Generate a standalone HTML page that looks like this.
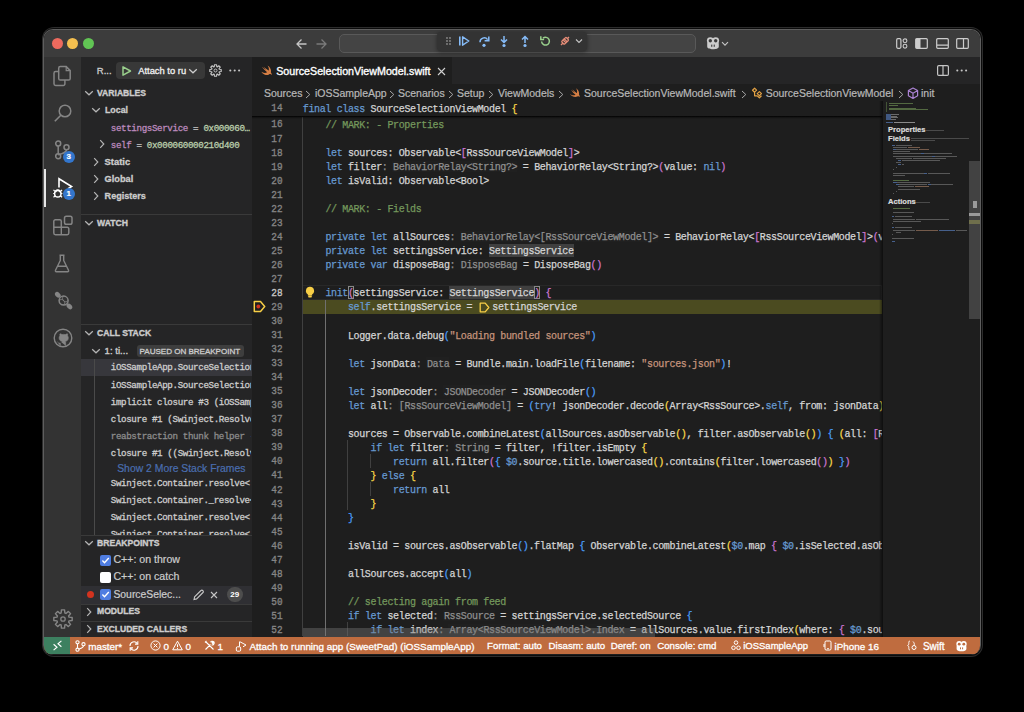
<!DOCTYPE html><html><head><meta charset="utf-8"><style>
html,body{margin:0;padding:0;background:#000;width:1024px;height:712px;overflow:hidden}
.t{position:absolute;white-space:pre;-webkit-text-stroke-width:0.2px}
.r{position:absolute}
#win{position:absolute;left:43px;top:29px;width:938px;height:626px;border-radius:10px;overflow:hidden;background:#1e1e1e}
</style></head><body>

<div style="position:absolute;left:41.5px;top:27px;width:941.5px;height:629.5px;border-radius:12px;background:#2c2c2c"></div>
<div style="position:absolute;left:42.5px;top:28px;width:939.5px;height:627.5px;border-radius:11px;background:#0c0c0c"></div>
<div style="position:absolute;left:43px;top:29px;width:938px;height:626px;border-radius:10px;background:#5e5e5e"></div>
<div style="position:absolute;left:0;top:0;width:1024px;height:712px;clip-path:inset(30px 44px 57px 44px round 9px);background:#1e1e1e">
<div class="r" style="left:44px;top:30px;width:936.00px;height:27.00px;background:#3c3c3c;"></div>
<div class="r" style="left:51.5px;top:38.0px;width:11px;height:11px;border-radius:50%;background:#ed6a5e"></div>
<div class="r" style="left:67.1px;top:38.0px;width:11px;height:11px;border-radius:50%;background:#f4bf4f"></div>
<div class="r" style="left:82.5px;top:38.0px;width:11px;height:11px;border-radius:50%;background:#61c554"></div>
<svg class="r" style="left:295px;top:38px;" width="13" height="12" viewBox="0 0 13 12"><path d="M11.5 6H2M6.5 1.5L2 6l4.5 4.5" fill="none" stroke="#c5c5c5" stroke-width="1.3"/></svg>
<svg class="r" style="left:315px;top:38px;" width="13" height="12" viewBox="0 0 13 12"><path d="M1.5 6H11M6.5 1.5L11 6l-4.5 4.5" fill="none" stroke="#7a7a7a" stroke-width="1.3"/></svg>
<div class="r" style="left:338.5px;top:34.2px;width:357px;height:18.5px;box-sizing:border-box;border:1px solid #595959;border-radius:5px;background:#444444"></div>
<div class="r" style="left:436.5px;top:31.7px;width:150.5px;height:19px;border-radius:4px;background:#333333;box-shadow:0 1px 4px rgba(0,0,0,0.45)"></div>
<svg class="r" style="left:446px;top:36.5px;" width="6" height="9" viewBox="0 0 6 9"><circle cx="1" cy="1" r="0.9" fill="#8a8a8a"/><circle cx="1" cy="4" r="0.9" fill="#8a8a8a"/><circle cx="1" cy="7" r="0.9" fill="#8a8a8a"/><circle cx="4" cy="1" r="0.9" fill="#8a8a8a"/><circle cx="4" cy="4" r="0.9" fill="#8a8a8a"/><circle cx="4" cy="7" r="0.9" fill="#8a8a8a"/></svg>
<svg class="r" style="left:458px;top:35px;" width="12" height="12" viewBox="0 0 12 12"><rect x="1" y="1.5" width="1.6" height="9" fill="#86bcf9"/><path d="M4.6 1.8v8.4L10.8 6z" fill="none" stroke="#86bcf9" stroke-width="1.4" stroke-linejoin="round"/></svg>
<svg class="r" style="left:478px;top:34.5px;" width="12" height="13" viewBox="0 0 12 13"><path d="M2 7.2A4.2 4.2 0 0 1 9.6 4.6" fill="none" stroke="#86bcf9" stroke-width="1.5"/><path d="M10.8 1.5v4.3H6.6" fill="none" stroke="#86bcf9" stroke-width="1.5"/><circle cx="6" cy="10.3" r="1.6" fill="#86bcf9"/></svg>
<svg class="r" style="left:498px;top:34.5px;" width="12" height="13" viewBox="0 0 12 13"><path d="M6 1v6M3 4.5L6 7.5 9 4.5" fill="none" stroke="#86bcf9" stroke-width="1.5"/><circle cx="6" cy="10.5" r="1.6" fill="#86bcf9"/></svg>
<svg class="r" style="left:518.5px;top:34.5px;" width="12" height="13" viewBox="0 0 12 13"><path d="M6 8V1.8M3 4.5L6 1.5 9 4.5" fill="none" stroke="#86bcf9" stroke-width="1.5"/><circle cx="6" cy="10.5" r="1.6" fill="#86bcf9"/></svg>
<svg class="r" style="left:538.5px;top:35px;" width="12" height="12" viewBox="0 0 12 12"><path d="M2.6 6.5A3.9 3.9 0 1 0 4 3.2" fill="none" stroke="#99cf8c" stroke-width="1.5"/><path d="M1.8 1.2v3.3h3.3" fill="none" stroke="#99cf8c" stroke-width="1.5"/></svg>
<svg class="r" style="left:559px;top:35px;" width="12" height="12" viewBox="0 0 12 12"><path d="M2 10L4 8M10 2L8 4" stroke="#e58c77" stroke-width="1.4"/><rect x="3.2" y="4.6" width="4" height="4" rx="1" transform="rotate(-45 5.2 6.6)" fill="none" stroke="#e58c77" stroke-width="1.3"/><rect x="5" y="3" width="4" height="4" rx="1" transform="rotate(-45 7 5)" fill="none" stroke="#e58c77" stroke-width="1.3"/></svg>
<svg class="r" style="left:574.5px;top:38px;" width="8" height="6" viewBox="0 0 8 6"><path d="M1 1.5l3 3 3-3" fill="none" stroke="#c5c5c5" stroke-width="1.1"/></svg>
<svg class="r" style="left:704.5px;top:36px;" width="16" height="14" viewBox="0 0 16 14"><path d="M2.2 8.2C2.2 5.5 3.5 4.6 8 4.6s5.8.9 5.8 3.6v2.2c0 1.8-2.6 2.8-5.8 2.8s-5.8-1-5.8-2.8z" fill="#cccccc"/><circle cx="5.3" cy="4.6" r="3.4" fill="#cccccc"/><circle cx="10.7" cy="4.6" r="3.4" fill="#cccccc"/><circle cx="5.3" cy="4.8" r="1.7" fill="#3c3c3c"/><circle cx="10.7" cy="4.8" r="1.7" fill="#3c3c3c"/><rect x="6.2" y="8.6" width="1.1" height="2.2" fill="#3c3c3c"/><rect x="8.7" y="8.6" width="1.1" height="2.2" fill="#3c3c3c"/></svg>
<svg class="r" style="left:721px;top:40.5px;" width="8" height="6" viewBox="0 0 8 6"><path d="M1 1.2l3 3 3-3" fill="none" stroke="#c5c5c5" stroke-width="1.1"/></svg>
<svg class="r" style="left:895.5px;top:38px;" width="12" height="11" viewBox="0 0 12 11"><rect x="0.7" y="0.7" width="4.2" height="9.6" rx="1.2" fill="none" stroke="#cccccc" stroke-width="1.2"/><circle cx="9" cy="2.8" r="1.9" fill="none" stroke="#cccccc" stroke-width="1.1"/><circle cx="9" cy="8.2" r="1.9" fill="none" stroke="#cccccc" stroke-width="1.1"/></svg>
<svg class="r" style="left:915px;top:38px;" width="13" height="11" viewBox="0 0 13 11"><rect x="0.7" y="0.7" width="11.6" height="9.6" rx="1" fill="none" stroke="#cccccc" stroke-width="1.2"/><rect x="1" y="1" width="4.5" height="9" fill="#cccccc"/></svg>
<svg class="r" style="left:935.5px;top:38px;" width="13" height="11" viewBox="0 0 13 11"><rect x="0.7" y="0.7" width="11.6" height="9.6" rx="1" fill="none" stroke="#cccccc" stroke-width="1.2"/><path d="M1 7.2h11" stroke="#cccccc" stroke-width="1.2"/></svg>
<svg class="r" style="left:955.5px;top:38px;" width="13" height="11" viewBox="0 0 13 11"><rect x="0.7" y="0.7" width="11.6" height="9.6" rx="1" fill="none" stroke="#cccccc" stroke-width="1.2"/><path d="M7.5 1v9" stroke="#cccccc" stroke-width="1.2"/></svg>
<div class="r" style="left:44px;top:57px;width:37.00px;height:580.00px;background:#333333;"></div>
<svg class="r" style="left:52px;top:65px;" width="21" height="22" viewBox="0 0 21 22"><path d="M8.3 1.6h5.9l4 4v7.9a1.6 1.6 0 0 1-1.6 1.6H8.3a1.6 1.6 0 0 1-1.6-1.6V3.2a1.6 1.6 0 0 1 1.6-1.6z" fill="none" stroke="#858585" stroke-width="1.5"/><path d="M14.2 1.6v4h4" fill="none" stroke="#858585" stroke-width="1.2"/><path d="M6.7 6.6H3.6A1.6 1.6 0 0 0 2 8.2v10.6a1.6 1.6 0 0 0 1.6 1.6h7.7a1.6 1.6 0 0 0 1.6-1.6v-3.7" fill="none" stroke="#858585" stroke-width="1.5"/></svg>
<svg class="r" style="left:53px;top:103px;" width="20" height="20" viewBox="0 0 20 20"><circle cx="12" cy="8" r="5.8" fill="none" stroke="#858585" stroke-width="1.5"/><path d="M7.8 12.2L1.8 18.2" stroke="#858585" stroke-width="1.6"/></svg>
<svg class="r" style="left:54px;top:140px;" width="17" height="21" viewBox="0 0 17 21"><circle cx="4.2" cy="3.6" r="2.5" fill="none" stroke="#858585" stroke-width="1.5"/><circle cx="4.2" cy="16.3" r="2.5" fill="none" stroke="#858585" stroke-width="1.5"/><circle cx="12.5" cy="7.3" r="2.5" fill="none" stroke="#858585" stroke-width="1.5"/><path d="M4.2 6.1v7.7M12.5 9.8c0 2.8-3.2 3.6-8.3 5" fill="none" stroke="#858585" stroke-width="1.5"/></svg>
<div class="r" style="left:62.7px;top:151.2px;width:12px;height:12px;border-radius:50%;background:#3376cd;color:#fff;font:bold 8px/12px 'Liberation Sans',sans-serif;text-align:center;-webkit-text-stroke:0.2px #fff">3</div>
<div class="r" style="left:44px;top:169px;width:2.00px;height:38.00px;background:#e7e7e7;"></div>
<svg class="r" style="left:52px;top:177px;" width="22" height="22" viewBox="0 0 22 22"><path d="M7 10.5V1.8L19.6 9.6 16 11.8" fill="none" stroke="#ffffff" stroke-width="1.6" stroke-linejoin="miter"/><path d="M3.6 15.2a2.2 2.2 0 0 1 4.4 0" fill="none" stroke="#ffffff" stroke-width="1.4"/><ellipse cx="5.8" cy="16.8" rx="3.2" ry="3.3" fill="none" stroke="#ffffff" stroke-width="1.5"/><path d="M1.2 16.5h1.6M8.8 16.5h1.6M1.5 12.8l1.5 1.5M10.1 12.8l-1.5 1.5M1.5 20.3l1.5-1.3M10.1 20.3l-1.5-1.3" stroke="#ffffff" stroke-width="1.2"/></svg>
<div class="r" style="left:62.7px;top:188.2px;width:12px;height:12px;border-radius:50%;background:#3376cd;color:#fff;font:bold 8px/12px 'Liberation Sans',sans-serif;text-align:center;-webkit-text-stroke:0.2px #fff">1</div>
<svg class="r" style="left:52px;top:214px;" width="22" height="22" viewBox="0 0 22 22"><path d="M1.8 7.3a1.6 1.6 0 0 1 1.6-1.6h4.3a1.6 1.6 0 0 1 1.6 1.6v5.9h5.9a1.6 1.6 0 0 1 1.6 1.6v4.3a1.6 1.6 0 0 1-1.6 1.6H3.4a1.6 1.6 0 0 1-1.6-1.6z" fill="none" stroke="#858585" stroke-width="1.5"/><path d="M1.8 13.2h7.5v7.5" fill="none" stroke="#858585" stroke-width="1.4"/><rect x="12.5" y="2.3" width="7.5" height="7.9" rx="1.8" fill="none" stroke="#858585" stroke-width="1.5"/></svg>
<svg class="r" style="left:54px;top:253.5px;" width="16" height="19" viewBox="0 0 16 19"><path d="M5.5 1.2h5M6.3 1.2v5.3L1.5 16.3a1 1 0 0 0 .9 1.5h11.2a1 1 0 0 0 .9-1.5L9.7 6.5V1.2M3.4 12.3h9.2" fill="none" stroke="#858585" stroke-width="1.4" stroke-linejoin="round"/></svg>
<svg class="r" style="left:53.5px;top:290.5px;" width="19" height="19" viewBox="0 0 19 19"><circle cx="9.6" cy="9.6" r="4.5" fill="none" stroke="#858585" stroke-width="1.5"/><path d="M9.6 5.3c-2 1.8-1 3.2 0 4.3s2 2.6 0 4.3M5.3 9.6c1.8-2 3.2-1 4.3 0s2.6 2 4.3 0" fill="none" stroke="#858585" stroke-width="0.9"/><ellipse cx="3.8" cy="3.8" rx="3.3" ry="2.3" transform="rotate(45 3.8 3.8)" fill="#858585"/><ellipse cx="15.4" cy="15.4" rx="3.3" ry="2.3" transform="rotate(45 15.4 15.4)" fill="#858585"/></svg>
<svg class="r" style="left:52.5px;top:328px;" width="20" height="20" viewBox="0 0 20 20"><circle cx="10" cy="10" r="8.8" fill="none" stroke="#858585" stroke-width="1.4"/><path d="M7.3 17.8v-2.6c-1.8.3-2.6-.7-3-1.6M12.7 17.8v-3c0-.7-.3-1.1-.6-1.4 2-.3 3.2-1.2 3.2-3.6 0-.8-.3-1.5-.8-2 .2-.5.2-1.3-.1-2-.7 0-1.4.3-2 .8a6.8 6.8 0 0 0-3.4 0c-.6-.5-1.3-.8-2-.8-.3.7-.3 1.5-.1 2-.5.5-.8 1.2-.8 2 0 2.4 1.2 3.3 3.2 3.6-.3.3-.5.6-.6 1.1" fill="#858585" stroke="#858585" stroke-width="0.6"/></svg>
<svg class="r" style="left:52.5px;top:608.5px;" width="20" height="20" viewBox="0 0 20 20"><path d="M19.17 8.43L19.17 11.57L16.02 11.86L15.57 12.94L17.59 15.37L15.37 17.59L12.94 15.57L11.86 16.02L11.57 19.17L8.43 19.17L8.14 16.02L7.06 15.57L4.63 17.59L2.41 15.37L4.43 12.94L3.98 11.86L0.83 11.57L0.83 8.43L3.98 8.14L4.43 7.06L2.41 4.63L4.63 2.41L7.06 4.43L8.14 3.98L8.43 0.83L11.57 0.83L11.86 3.98L12.94 4.43L15.37 2.41L17.59 4.63L15.57 7.06L16.02 8.14z" fill="none" stroke="#858585" stroke-width="1.4" stroke-linejoin="round"/><circle cx="10" cy="10" r="2.2" fill="none" stroke="#858585" stroke-width="1.3"/></svg>
<div class="r" style="left:81px;top:57px;width:171.00px;height:580.00px;background:#252526;"></div>
<div class="t" style="left:96.80px;top:65.80px;line-height:10.613px;font-size:9.5px;color:#cccccc;font-weight:400;font-family:'Liberation Sans', sans-serif;-webkit-text-stroke-width:0.3px">R...</div>
<div class="r" style="left:115.7px;top:61.8px;width:89px;height:17.5px;border-radius:4px;background:#383838"></div>
<svg class="r" style="left:120.5px;top:64.5px;" width="11" height="12" viewBox="0 0 11 12"><path d="M2 1.8v8.4L9.5 6z" fill="none" stroke="#99cf8c" stroke-width="1.5" stroke-linejoin="round"/></svg>
<div class="t" style="left:138.20px;top:65.89px;line-height:10.502px;font-size:9.4px;color:#f0f0f0;font-weight:400;font-family:'Liberation Sans', sans-serif;-webkit-text-stroke-width:0.3px">Attach to ru</div>
<svg class="r" style="left:188px;top:67.6px;" width="10" height="6" viewBox="0 0 10 6"><path d="M1.2 1.2L5 4.8 8.8 1.2" fill="none" stroke="#cccccc" stroke-width="1.2"/></svg>
<svg class="r" style="left:209px;top:64px;" width="13" height="13" viewBox="0 0 13 13"><path d="M12.21 5.46L12.21 7.54L10.30 7.76L10.07 8.30L11.27 9.80L9.80 11.27L8.30 10.07L7.76 10.30L7.54 12.21L5.46 12.21L5.24 10.30L4.70 10.07L3.20 11.27L1.73 9.80L2.93 8.30L2.70 7.76L0.79 7.54L0.79 5.46L2.70 5.24L2.93 4.70L1.73 3.20L3.20 1.73L4.70 2.93L5.24 2.70L5.46 0.79L7.54 0.79L7.76 2.70L8.30 2.93L9.80 1.73L11.27 3.20L10.07 4.70L10.30 5.24z" fill="none" stroke="#c5c5c5" stroke-width="1.15" stroke-linejoin="round"/><circle cx="6.5" cy="6.5" r="1.5" fill="none" stroke="#c5c5c5" stroke-width="1"/></svg>
<svg class="r" style="left:228.5px;top:69px;" width="12" height="3" viewBox="0 0 12 3"><circle cx="1.3" cy="1.5" r="1.05" fill="#c5c5c5"/><circle cx="5.7" cy="1.5" r="1.05" fill="#c5c5c5"/><circle cx="10.100000000000001" cy="1.5" r="1.05" fill="#c5c5c5"/></svg>
<svg class="r" style="left:84px;top:89.6px;" width="10" height="6" viewBox="0 0 10 6"><path d="M1.2 1.2L5 4.8 8.8 1.2" fill="none" stroke="#b4b4b4" stroke-width="1.2"/></svg>
<div class="t" style="left:97.00px;top:89.01px;line-height:9.608px;font-size:8.6px;color:#cccccc;font-weight:700;font-family:'Liberation Sans', sans-serif;-webkit-text-stroke-width:0.35px">VARIABLES</div>
<svg class="r" style="left:91px;top:107.3px;" width="10" height="6" viewBox="0 0 10 6"><path d="M1.2 1.2L5 4.8 8.8 1.2" fill="none" stroke="#b4b4b4" stroke-width="1.2"/></svg>
<div class="t" style="left:105.00px;top:105.93px;line-height:9.831px;font-size:8.8px;color:#cccccc;font-weight:700;font-family:'Liberation Sans', sans-serif;-webkit-text-stroke-width:0.3px">Local</div>
<div class="t" style="left:110.80px;top:123.84px;line-height:10.422px;font-size:9.2px;color:#cccccc;font-weight:400;font-family:'Liberation Mono', monospace;letter-spacing:-0.37px;-webkit-text-stroke-width:0.3px"><span style="color:#bc89bd">settingsService</span> = <span style="color:#bacdab">0x000060…</span></div>
<svg class="r" style="left:99px;top:139.3px;" width="6" height="10" viewBox="0 0 6 10"><path d="M1.2 1.2L4.8 5 1.2 8.8" fill="none" stroke="#b4b4b4" stroke-width="1.2"/></svg>
<div class="t" style="left:110.80px;top:140.94px;line-height:10.422px;font-size:9.2px;color:#cccccc;font-weight:400;font-family:'Liberation Mono', monospace;letter-spacing:-0.37px;-webkit-text-stroke-width:0.3px"><span style="color:#bc89bd">self</span> = <span style="color:#bacdab">0x000060000210d400</span></div>
<svg class="r" style="left:92.5px;top:156.5px;" width="6" height="10" viewBox="0 0 6 10"><path d="M1.2 1.2L4.8 5 1.2 8.8" fill="none" stroke="#b4b4b4" stroke-width="1.2"/></svg>
<div class="t" style="left:104.60px;top:156.59px;line-height:10.502px;font-size:9.4px;color:#cccccc;font-weight:700;font-family:'Liberation Sans', sans-serif;-webkit-text-stroke-width:0.3px">Static</div>
<svg class="r" style="left:92.5px;top:173.5px;" width="6" height="10" viewBox="0 0 6 10"><path d="M1.2 1.2L4.8 5 1.2 8.8" fill="none" stroke="#b4b4b4" stroke-width="1.2"/></svg>
<div class="t" style="left:104.60px;top:173.77px;line-height:10.278px;font-size:9.2px;color:#cccccc;font-weight:700;font-family:'Liberation Sans', sans-serif;-webkit-text-stroke-width:0.3px">Global</div>
<svg class="r" style="left:92.5px;top:190.5px;" width="6" height="10" viewBox="0 0 6 10"><path d="M1.2 1.2L4.8 5 1.2 8.8" fill="none" stroke="#b4b4b4" stroke-width="1.2"/></svg>
<div class="t" style="left:104.60px;top:190.91px;line-height:10.111px;font-size:9.05px;color:#cccccc;font-weight:700;font-family:'Liberation Sans', sans-serif;-webkit-text-stroke-width:0.3px">Registers</div>
<div class="r" style="left:81px;top:214px;width:171.00px;height:1.00px;background:#3a3a3a;"></div>
<svg class="r" style="left:84px;top:220px;" width="10" height="6" viewBox="0 0 10 6"><path d="M1.2 1.2L5 4.8 8.8 1.2" fill="none" stroke="#b4b4b4" stroke-width="1.2"/></svg>
<div class="t" style="left:97.00px;top:218.61px;line-height:9.608px;font-size:8.6px;color:#cccccc;font-weight:700;font-family:'Liberation Sans', sans-serif;-webkit-text-stroke-width:0.35px">WATCH</div>
<div class="r" style="left:81px;top:324px;width:171.00px;height:1.00px;background:#3a3a3a;"></div>
<svg class="r" style="left:84px;top:330.4px;" width="10" height="6" viewBox="0 0 10 6"><path d="M1.2 1.2L5 4.8 8.8 1.2" fill="none" stroke="#b4b4b4" stroke-width="1.2"/></svg>
<div class="t" style="left:97.00px;top:329.01px;line-height:9.608px;font-size:8.6px;color:#cccccc;font-weight:700;font-family:'Liberation Sans', sans-serif;-webkit-text-stroke-width:0.35px">CALL STACK</div>
<svg class="r" style="left:91px;top:347.6px;" width="10" height="6" viewBox="0 0 10 6"><path d="M1.2 1.2L5 4.8 8.8 1.2" fill="none" stroke="#b4b4b4" stroke-width="1.2"/></svg>
<div class="t" style="left:104.60px;top:345.71px;line-height:10.725px;font-size:9.6px;color:#cccccc;font-weight:400;font-family:'Liberation Sans', sans-serif;-webkit-text-stroke-width:0.35px">1: ti...</div>
<div class="r" style="left:137px;top:345px;width:106.5px;height:11.5px;border-radius:3px;background:#3e3e3e"></div>
<div class="t" style="left:139.60px;top:347.07px;line-height:9.049px;font-size:8.1px;color:#cccccc;font-weight:400;font-family:'Liberation Sans', sans-serif;-webkit-text-stroke-width:0.3px;letter-spacing:-0.05px">PAUSED ON BREAKPOINT</div>
<div class="r" style="left:81px;top:359px;width:171.00px;height:17.00px;background:#37373c;"></div>
<div class="r" style="left:93.5px;top:359px;width:1.00px;height:176.00px;background:#4a4a4a;"></div>
<div class="r" style="left:81px;top:359px;width:170px;height:176px;overflow:hidden">
<div class="t" style="left:29.80px;top:4.44px;line-height:10.422px;font-size:9.2px;color:#cccccc;font-weight:400;font-family:'Liberation Mono', monospace;letter-spacing:-0.37px;-webkit-text-stroke-width:0.3px">iOSSampleApp.SourceSelectionViewModel.init</div>
<div class="t" style="left:29.80px;top:21.64px;line-height:10.422px;font-size:9.2px;color:#cccccc;font-weight:400;font-family:'Liberation Mono', monospace;letter-spacing:-0.37px;-webkit-text-stroke-width:0.3px">iOSSampleApp.SourceSelectionViewModel.__allocating_init</div>
<div class="t" style="left:29.80px;top:38.84px;line-height:10.422px;font-size:9.2px;color:#cccccc;font-weight:400;font-family:'Liberation Mono', monospace;letter-spacing:-0.37px;-webkit-text-stroke-width:0.3px">implicit closure #3 (iOSSampleApp</div>
<div class="t" style="left:29.80px;top:56.04px;line-height:10.422px;font-size:9.2px;color:#cccccc;font-weight:400;font-family:'Liberation Mono', monospace;letter-spacing:-0.37px;-webkit-text-stroke-width:0.3px">closure #1 (Swinject.Resolver)</div>
<div class="t" style="left:29.80px;top:73.24px;line-height:10.422px;font-size:9.2px;color:#8b8b8b;font-weight:400;font-family:'Liberation Mono', monospace;letter-spacing:-0.37px;-webkit-text-stroke-width:0.3px">reabstraction thunk helper -</div>
<div class="t" style="left:29.80px;top:90.44px;line-height:10.422px;font-size:9.2px;color:#cccccc;font-weight:400;font-family:'Liberation Mono', monospace;letter-spacing:-0.37px;-webkit-text-stroke-width:0.3px">closure #1 ((Swinject.Resolver</div>
<div class="t" style="left:29.80px;top:120.44px;line-height:10.422px;font-size:9.2px;color:#cccccc;font-weight:400;font-family:'Liberation Mono', monospace;letter-spacing:-0.37px;-webkit-text-stroke-width:0.3px">Swinject.Container.resolve&lt;</div>
<div class="t" style="left:29.80px;top:137.44px;line-height:10.422px;font-size:9.2px;color:#cccccc;font-weight:400;font-family:'Liberation Mono', monospace;letter-spacing:-0.37px;-webkit-text-stroke-width:0.3px">Swinject.Container._resolve&lt;</div>
<div class="t" style="left:29.80px;top:154.44px;line-height:10.422px;font-size:9.2px;color:#cccccc;font-weight:400;font-family:'Liberation Mono', monospace;letter-spacing:-0.37px;-webkit-text-stroke-width:0.3px">Swinject.Container.resolve&lt;</div>
<div class="t" style="left:29.80px;top:171.44px;line-height:10.422px;font-size:9.2px;color:#cccccc;font-weight:400;font-family:'Liberation Mono', monospace;letter-spacing:-0.37px;-webkit-text-stroke-width:0.3px">Swinject.Container.resolve&lt;</div>
</div>
<div class="t" style="left:117.20px;top:462.79px;line-height:11.619px;font-size:10.4px;color:#4a6eb0;font-weight:400;font-family:'Liberation Sans', sans-serif;">Show 2 More Stack Frames</div>
<div class="r" style="left:81px;top:535px;width:171.00px;height:1.00px;background:#3a3a3a;"></div>
<div class="r" style="left:81px;top:536px;width:171.00px;height:16.00px;background:#252526;"></div>
<svg class="r" style="left:84px;top:540px;" width="10" height="6" viewBox="0 0 10 6"><path d="M1.2 1.2L5 4.8 8.8 1.2" fill="none" stroke="#b4b4b4" stroke-width="1.2"/></svg>
<div class="t" style="left:97.00px;top:538.61px;line-height:9.608px;font-size:8.6px;color:#cccccc;font-weight:700;font-family:'Liberation Sans', sans-serif;-webkit-text-stroke-width:0.35px">BREAKPOINTS</div>
<svg class="r" style="left:100.2px;top:554.7px;" width="11" height="11" viewBox="0 0 11 11"><rect x="0" y="0" width="11" height="11" rx="2" fill="#4f7de1"/><path d="M2.4 5.6L4.5 7.8 8.8 3" fill="none" stroke="#fff" stroke-width="1.4"/></svg>
<div class="t" style="left:113.40px;top:554.40px;line-height:11.842px;font-size:10.6px;color:#cccccc;font-weight:400;font-family:'Liberation Sans', sans-serif;">C++: on throw</div>
<svg class="r" style="left:100.2px;top:571.6px;" width="11" height="11" viewBox="0 0 11 11"><rect x="0" y="0" width="11" height="11" rx="2" fill="#ffffff"/></svg>
<div class="t" style="left:113.40px;top:571.30px;line-height:11.842px;font-size:10.6px;color:#cccccc;font-weight:400;font-family:'Liberation Sans', sans-serif;">C++: on catch</div>
<div class="r" style="left:81px;top:586px;width:171.00px;height:17.50px;background:#2f2f33;"></div>
<div class="r" style="left:86.7px;top:590.8px;width:7.4px;height:7.4px;border-radius:50%;background:#d2331f"></div>
<svg class="r" style="left:100.2px;top:589.0px;" width="11" height="11" viewBox="0 0 11 11"><rect x="0" y="0" width="11" height="11" rx="2" fill="#4f7de1"/><path d="M2.4 5.6L4.5 7.8 8.8 3" fill="none" stroke="#fff" stroke-width="1.4"/></svg>
<div class="t" style="left:113.40px;top:588.89px;line-height:11.619px;font-size:10.4px;color:#cccccc;font-weight:400;font-family:'Liberation Sans', sans-serif;">SourceSelec...</div>
<svg class="r" style="left:192px;top:588.5px;" width="13" height="12" viewBox="0 0 13 12"><path d="M2 10.5l.6-2.6L9 1.5a1.2 1.2 0 0 1 1.7 0l.3.3a1.2 1.2 0 0 1 0 1.7L4.6 9.9z" fill="none" stroke="#c5c5c5" stroke-width="1.1"/></svg>
<svg class="r" style="left:209.5px;top:590.5px;" width="8" height="8" viewBox="0 0 8 8"><path d="M1 1l6 6M7 1L1 7" stroke="#c5c5c5" stroke-width="1.1"/></svg>
<div class="r" style="left:226.7px;top:586.8px;width:16px;height:15.5px;border-radius:8px;background:#4d4d4d;color:#fff;font:bold 8px/15.5px 'Liberation Sans',sans-serif;text-align:center">29</div>
<div class="r" style="left:81px;top:603.5px;width:171.00px;height:1.00px;background:#3a3a3a;"></div>
<svg class="r" style="left:86px;top:606.7px;" width="6" height="10" viewBox="0 0 6 10"><path d="M1.2 1.2L4.8 5 1.2 8.8" fill="none" stroke="#b4b4b4" stroke-width="1.2"/></svg>
<div class="t" style="left:97.00px;top:607.31px;line-height:9.608px;font-size:8.6px;color:#cccccc;font-weight:700;font-family:'Liberation Sans', sans-serif;-webkit-text-stroke-width:0.35px">MODULES</div>
<div class="r" style="left:81px;top:620.5px;width:171.00px;height:1.00px;background:#3a3a3a;"></div>
<svg class="r" style="left:86px;top:624px;" width="6" height="10" viewBox="0 0 6 10"><path d="M1.2 1.2L4.8 5 1.2 8.8" fill="none" stroke="#b4b4b4" stroke-width="1.2"/></svg>
<div class="t" style="left:97.00px;top:624.61px;line-height:9.608px;font-size:8.6px;color:#cccccc;font-weight:700;font-family:'Liberation Sans', sans-serif;-webkit-text-stroke-width:0.35px">EXCLUDED CALLERS</div>
<div class="r" style="left:252px;top:57px;width:728.00px;height:27.00px;background:#252526;"></div>
<div class="r" style="left:252px;top:57px;width:200.00px;height:27.00px;background:#1e1e1e;"></div>
<svg class="r" style="left:260.3px;top:65px;" width="12" height="11" viewBox="0.6 3.2 20.4 17.6"><path d="M13.543 3.41c4.114 2.47 6.545 7.162 5.549 11.131-.024.093-.05.181-.076.272l.002.001c2.062 2.538 1.5 5.258 1.236 4.745-1.072-2.086-3.066-1.568-4.088-1.043a6.803 6.803 0 0 1-.281.158l-.02.012-.002.002c-2.115 1.123-4.957 1.205-7.812-.022a12.568 12.568 0 0 1-5.640-4.838c.649.48 1.35.902 2.097 1.252 3.019 1.414 6.051 1.311 8.197-.002C9.651 12.73 7.101 9.67 5.146 7.191a10.628 10.628 0 0 1-1.005-1.384c2.34 2.142 6.038 4.83 7.365 5.576C8.69 8.408 6.208 4.743 6.324 4.86c4.436 4.47 8.528 6.996 8.528 6.996.154.085.27.154.36.213.085-.215.16-.437.224-.668.708-2.588-.09-5.548-1.893-7.992z" fill="#d57e44"/></svg>
<div class="t" style="left:276.20px;top:65.91px;line-height:11.954px;font-size:10.7px;color:#ffffff;font-weight:400;font-family:'Liberation Sans', sans-serif;-webkit-text-stroke-width:0.35px">SourceSelectionViewModel.swift</div>
<svg class="r" style="left:437px;top:66.5px;" width="9" height="9" viewBox="0 0 9 9"><path d="M1 1l7 7M8 1L1 8" stroke="#d0d0d0" stroke-width="1.1"/></svg>
<svg class="r" style="left:936.5px;top:64.5px;" width="12" height="11" viewBox="0 0 12 11"><rect x="0.6" y="0.6" width="10.8" height="9.8" rx="1.2" fill="none" stroke="#c5c5c5" stroke-width="1.2"/><path d="M6 1v9" stroke="#c5c5c5" stroke-width="1.2"/></svg>
<svg class="r" style="left:956px;top:69px;" width="12" height="3" viewBox="0 0 12 3"><circle cx="1.3" cy="1.5" r="1.05" fill="#c5c5c5"/><circle cx="5.7" cy="1.5" r="1.05" fill="#c5c5c5"/><circle cx="10.100000000000001" cy="1.5" r="1.05" fill="#c5c5c5"/></svg>
<div class="t" style="left:263.90px;top:88.09px;line-height:11.730px;font-size:10.5px;color:#b8b8b8;font-weight:400;font-family:'Liberation Sans', sans-serif;">Sources</div>
<svg class="r" style="left:305.3px;top:89.5px;" width="7" height="9" viewBox="0 0 7 9"><path d="M1 1l3.8 3.5L1 8" fill="none" stroke="#a8a8a8" stroke-width="1"/></svg>
<div class="t" style="left:314.90px;top:88.09px;line-height:11.730px;font-size:10.5px;color:#b8b8b8;font-weight:400;font-family:'Liberation Sans', sans-serif;">iOSSampleApp</div>
<svg class="r" style="left:388.7px;top:89.5px;" width="7" height="9" viewBox="0 0 7 9"><path d="M1 1l3.8 3.5L1 8" fill="none" stroke="#a8a8a8" stroke-width="1"/></svg>
<div class="t" style="left:398.00px;top:88.09px;line-height:11.730px;font-size:10.5px;color:#b8b8b8;font-weight:400;font-family:'Liberation Sans', sans-serif;">Scenarios</div>
<svg class="r" style="left:448.3px;top:89.5px;" width="7" height="9" viewBox="0 0 7 9"><path d="M1 1l3.8 3.5L1 8" fill="none" stroke="#a8a8a8" stroke-width="1"/></svg>
<div class="t" style="left:456.90px;top:88.09px;line-height:11.730px;font-size:10.5px;color:#b8b8b8;font-weight:400;font-family:'Liberation Sans', sans-serif;">Setup</div>
<svg class="r" style="left:488.0px;top:89.5px;" width="7" height="9" viewBox="0 0 7 9"><path d="M1 1l3.8 3.5L1 8" fill="none" stroke="#a8a8a8" stroke-width="1"/></svg>
<div class="t" style="left:497.90px;top:88.09px;line-height:11.730px;font-size:10.5px;color:#b8b8b8;font-weight:400;font-family:'Liberation Sans', sans-serif;">ViewModels</div>
<svg class="r" style="left:557.7px;top:89.5px;" width="7" height="9" viewBox="0 0 7 9"><path d="M1 1l3.8 3.5L1 8" fill="none" stroke="#a8a8a8" stroke-width="1"/></svg>
<svg class="r" style="left:568.8px;top:88.3px;" width="11" height="10" viewBox="0.6 3.2 20.4 17.6"><path d="M13.543 3.41c4.114 2.47 6.545 7.162 5.549 11.131-.024.093-.05.181-.076.272l.002.001c2.062 2.538 1.5 5.258 1.236 4.745-1.072-2.086-3.066-1.568-4.088-1.043a6.803 6.803 0 0 1-.281.158l-.02.012-.002.002c-2.115 1.123-4.957 1.205-7.812-.022a12.568 12.568 0 0 1-5.640-4.838c.649.48 1.35.902 2.097 1.252 3.019 1.414 6.051 1.311 8.197-.002C9.651 12.73 7.101 9.67 5.146 7.191a10.628 10.628 0 0 1-1.005-1.384c2.34 2.142 6.038 4.83 7.365 5.576C8.69 8.408 6.208 4.743 6.324 4.86c4.436 4.47 8.528 6.996 8.528 6.996.154.085.27.154.36.213.085-.215.16-.437.224-.668.708-2.588-.09-5.548-1.893-7.992z" fill="#d57e44"/></svg>
<div class="t" style="left:584.00px;top:88.09px;line-height:11.730px;font-size:10.5px;color:#b8b8b8;font-weight:400;font-family:'Liberation Sans', sans-serif;">SourceSelectionViewModel.swift</div>
<svg class="r" style="left:741.4px;top:89.5px;" width="7" height="9" viewBox="0 0 7 9"><path d="M1 1l3.8 3.5L1 8" fill="none" stroke="#a8a8a8" stroke-width="1"/></svg>
<svg class="r" style="left:750.5px;top:87px;" width="12" height="12" viewBox="0 0 12 12"><path d="M1.5 3.2L3.6 1.2 5.6 3.2 3.6 5.2zM3.6 5.2v3.6h2.6M6.2 6.6l2.2-2 2.1 2-2.1 2zM6.2 8.8l2.2 2 2.1-2" fill="none" stroke="#e2a144" stroke-width="1.2" stroke-linejoin="round"/></svg>
<div class="t" style="left:765.70px;top:88.09px;line-height:11.730px;font-size:10.5px;color:#b8b8b8;font-weight:400;font-family:'Liberation Sans', sans-serif;">SourceSelectionViewModel</div>
<svg class="r" style="left:897.5px;top:89.5px;" width="7" height="9" viewBox="0 0 7 9"><path d="M1 1l3.8 3.5L1 8" fill="none" stroke="#a8a8a8" stroke-width="1"/></svg>
<svg class="r" style="left:906.5px;top:86.5px;" width="12" height="12" viewBox="0 0 12 12"><path d="M6 1l4.6 2.6v5.2L6 11.4 1.4 8.8V3.6zM1.4 3.6L6 6.2l4.6-2.6M6 6.2v5.2" fill="none" stroke="#aa82d2" stroke-width="1.2" stroke-linejoin="round"/></svg>
<div class="t" style="left:921.00px;top:88.09px;line-height:11.730px;font-size:10.5px;color:#b8b8b8;font-weight:400;font-family:'Liberation Sans', sans-serif;">init</div>
<div class="t" style="left:271.32px;top:104.47px;line-height:10.648px;font-size:9.4px;color:#858585;font-weight:400;font-family:'Liberation Mono', monospace;transform:scaleY(1.12);transform-origin:0 100%;-webkit-text-stroke:0.3px currentColor">14</div>
<div class="t" style="left:271.32px;top:120.47px;line-height:10.648px;font-size:9.4px;color:#858585;font-weight:400;font-family:'Liberation Mono', monospace;transform:scaleY(1.12);transform-origin:0 100%;-webkit-text-stroke:0.3px currentColor">16</div>
<div class="t" style="left:271.32px;top:134.51px;line-height:10.648px;font-size:9.4px;color:#858585;font-weight:400;font-family:'Liberation Mono', monospace;transform:scaleY(1.12);transform-origin:0 100%;-webkit-text-stroke:0.3px currentColor">17</div>
<div class="t" style="left:271.32px;top:148.55px;line-height:10.648px;font-size:9.4px;color:#858585;font-weight:400;font-family:'Liberation Mono', monospace;transform:scaleY(1.12);transform-origin:0 100%;-webkit-text-stroke:0.3px currentColor">18</div>
<div class="t" style="left:271.32px;top:162.59px;line-height:10.648px;font-size:9.4px;color:#858585;font-weight:400;font-family:'Liberation Mono', monospace;transform:scaleY(1.12);transform-origin:0 100%;-webkit-text-stroke:0.3px currentColor">19</div>
<div class="t" style="left:271.32px;top:176.63px;line-height:10.648px;font-size:9.4px;color:#858585;font-weight:400;font-family:'Liberation Mono', monospace;transform:scaleY(1.12);transform-origin:0 100%;-webkit-text-stroke:0.3px currentColor">20</div>
<div class="t" style="left:271.32px;top:190.67px;line-height:10.648px;font-size:9.4px;color:#858585;font-weight:400;font-family:'Liberation Mono', monospace;transform:scaleY(1.12);transform-origin:0 100%;-webkit-text-stroke:0.3px currentColor">21</div>
<div class="t" style="left:271.32px;top:204.71px;line-height:10.648px;font-size:9.4px;color:#858585;font-weight:400;font-family:'Liberation Mono', monospace;transform:scaleY(1.12);transform-origin:0 100%;-webkit-text-stroke:0.3px currentColor">22</div>
<div class="t" style="left:271.32px;top:218.75px;line-height:10.648px;font-size:9.4px;color:#858585;font-weight:400;font-family:'Liberation Mono', monospace;transform:scaleY(1.12);transform-origin:0 100%;-webkit-text-stroke:0.3px currentColor">23</div>
<div class="t" style="left:271.32px;top:232.79px;line-height:10.648px;font-size:9.4px;color:#858585;font-weight:400;font-family:'Liberation Mono', monospace;transform:scaleY(1.12);transform-origin:0 100%;-webkit-text-stroke:0.3px currentColor">24</div>
<div class="t" style="left:271.32px;top:246.83px;line-height:10.648px;font-size:9.4px;color:#858585;font-weight:400;font-family:'Liberation Mono', monospace;transform:scaleY(1.12);transform-origin:0 100%;-webkit-text-stroke:0.3px currentColor">25</div>
<div class="t" style="left:271.32px;top:260.87px;line-height:10.648px;font-size:9.4px;color:#858585;font-weight:400;font-family:'Liberation Mono', monospace;transform:scaleY(1.12);transform-origin:0 100%;-webkit-text-stroke:0.3px currentColor">26</div>
<div class="t" style="left:271.32px;top:274.91px;line-height:10.648px;font-size:9.4px;color:#858585;font-weight:400;font-family:'Liberation Mono', monospace;transform:scaleY(1.12);transform-origin:0 100%;-webkit-text-stroke:0.3px currentColor">27</div>
<div class="t" style="left:271.32px;top:288.95px;line-height:10.648px;font-size:9.4px;color:#c6c6c6;font-weight:400;font-family:'Liberation Mono', monospace;transform:scaleY(1.12);transform-origin:0 100%;-webkit-text-stroke:0.3px currentColor">28</div>
<div class="t" style="left:271.32px;top:302.99px;line-height:10.648px;font-size:9.4px;color:#858585;font-weight:400;font-family:'Liberation Mono', monospace;transform:scaleY(1.12);transform-origin:0 100%;-webkit-text-stroke:0.3px currentColor">29</div>
<div class="t" style="left:271.32px;top:317.03px;line-height:10.648px;font-size:9.4px;color:#858585;font-weight:400;font-family:'Liberation Mono', monospace;transform:scaleY(1.12);transform-origin:0 100%;-webkit-text-stroke:0.3px currentColor">30</div>
<div class="t" style="left:271.32px;top:331.07px;line-height:10.648px;font-size:9.4px;color:#858585;font-weight:400;font-family:'Liberation Mono', monospace;transform:scaleY(1.12);transform-origin:0 100%;-webkit-text-stroke:0.3px currentColor">31</div>
<div class="t" style="left:271.32px;top:345.11px;line-height:10.648px;font-size:9.4px;color:#858585;font-weight:400;font-family:'Liberation Mono', monospace;transform:scaleY(1.12);transform-origin:0 100%;-webkit-text-stroke:0.3px currentColor">32</div>
<div class="t" style="left:271.32px;top:359.15px;line-height:10.648px;font-size:9.4px;color:#858585;font-weight:400;font-family:'Liberation Mono', monospace;transform:scaleY(1.12);transform-origin:0 100%;-webkit-text-stroke:0.3px currentColor">33</div>
<div class="t" style="left:271.32px;top:373.19px;line-height:10.648px;font-size:9.4px;color:#858585;font-weight:400;font-family:'Liberation Mono', monospace;transform:scaleY(1.12);transform-origin:0 100%;-webkit-text-stroke:0.3px currentColor">34</div>
<div class="t" style="left:271.32px;top:387.23px;line-height:10.648px;font-size:9.4px;color:#858585;font-weight:400;font-family:'Liberation Mono', monospace;transform:scaleY(1.12);transform-origin:0 100%;-webkit-text-stroke:0.3px currentColor">35</div>
<div class="t" style="left:271.32px;top:401.27px;line-height:10.648px;font-size:9.4px;color:#858585;font-weight:400;font-family:'Liberation Mono', monospace;transform:scaleY(1.12);transform-origin:0 100%;-webkit-text-stroke:0.3px currentColor">36</div>
<div class="t" style="left:271.32px;top:415.31px;line-height:10.648px;font-size:9.4px;color:#858585;font-weight:400;font-family:'Liberation Mono', monospace;transform:scaleY(1.12);transform-origin:0 100%;-webkit-text-stroke:0.3px currentColor">37</div>
<div class="t" style="left:271.32px;top:429.35px;line-height:10.648px;font-size:9.4px;color:#858585;font-weight:400;font-family:'Liberation Mono', monospace;transform:scaleY(1.12);transform-origin:0 100%;-webkit-text-stroke:0.3px currentColor">38</div>
<div class="t" style="left:271.32px;top:443.39px;line-height:10.648px;font-size:9.4px;color:#858585;font-weight:400;font-family:'Liberation Mono', monospace;transform:scaleY(1.12);transform-origin:0 100%;-webkit-text-stroke:0.3px currentColor">39</div>
<div class="t" style="left:271.32px;top:457.43px;line-height:10.648px;font-size:9.4px;color:#858585;font-weight:400;font-family:'Liberation Mono', monospace;transform:scaleY(1.12);transform-origin:0 100%;-webkit-text-stroke:0.3px currentColor">40</div>
<div class="t" style="left:271.32px;top:471.47px;line-height:10.648px;font-size:9.4px;color:#858585;font-weight:400;font-family:'Liberation Mono', monospace;transform:scaleY(1.12);transform-origin:0 100%;-webkit-text-stroke:0.3px currentColor">41</div>
<div class="t" style="left:271.32px;top:485.51px;line-height:10.648px;font-size:9.4px;color:#858585;font-weight:400;font-family:'Liberation Mono', monospace;transform:scaleY(1.12);transform-origin:0 100%;-webkit-text-stroke:0.3px currentColor">42</div>
<div class="t" style="left:271.32px;top:499.55px;line-height:10.648px;font-size:9.4px;color:#858585;font-weight:400;font-family:'Liberation Mono', monospace;transform:scaleY(1.12);transform-origin:0 100%;-webkit-text-stroke:0.3px currentColor">43</div>
<div class="t" style="left:271.32px;top:513.59px;line-height:10.648px;font-size:9.4px;color:#858585;font-weight:400;font-family:'Liberation Mono', monospace;transform:scaleY(1.12);transform-origin:0 100%;-webkit-text-stroke:0.3px currentColor">44</div>
<div class="t" style="left:271.32px;top:527.63px;line-height:10.648px;font-size:9.4px;color:#858585;font-weight:400;font-family:'Liberation Mono', monospace;transform:scaleY(1.12);transform-origin:0 100%;-webkit-text-stroke:0.3px currentColor">45</div>
<div class="t" style="left:271.32px;top:541.67px;line-height:10.648px;font-size:9.4px;color:#858585;font-weight:400;font-family:'Liberation Mono', monospace;transform:scaleY(1.12);transform-origin:0 100%;-webkit-text-stroke:0.3px currentColor">46</div>
<div class="t" style="left:271.32px;top:555.71px;line-height:10.648px;font-size:9.4px;color:#858585;font-weight:400;font-family:'Liberation Mono', monospace;transform:scaleY(1.12);transform-origin:0 100%;-webkit-text-stroke:0.3px currentColor">47</div>
<div class="t" style="left:271.32px;top:569.75px;line-height:10.648px;font-size:9.4px;color:#858585;font-weight:400;font-family:'Liberation Mono', monospace;transform:scaleY(1.12);transform-origin:0 100%;-webkit-text-stroke:0.3px currentColor">48</div>
<div class="t" style="left:271.32px;top:583.79px;line-height:10.648px;font-size:9.4px;color:#858585;font-weight:400;font-family:'Liberation Mono', monospace;transform:scaleY(1.12);transform-origin:0 100%;-webkit-text-stroke:0.3px currentColor">49</div>
<div class="t" style="left:271.32px;top:597.83px;line-height:10.648px;font-size:9.4px;color:#858585;font-weight:400;font-family:'Liberation Mono', monospace;transform:scaleY(1.12);transform-origin:0 100%;-webkit-text-stroke:0.3px currentColor">50</div>
<div class="t" style="left:271.32px;top:611.87px;line-height:10.648px;font-size:9.4px;color:#858585;font-weight:400;font-family:'Liberation Mono', monospace;transform:scaleY(1.12);transform-origin:0 100%;-webkit-text-stroke:0.3px currentColor">51</div>
<div class="t" style="left:271.32px;top:625.91px;line-height:10.648px;font-size:9.4px;color:#858585;font-weight:400;font-family:'Liberation Mono', monospace;transform:scaleY(1.12);transform-origin:0 100%;-webkit-text-stroke:0.3px currentColor">52</div>
<div class="r" style="left:302px;top:285.48px;width:580px;height:14.04px;box-sizing:border-box;border:1px solid #282828"></div>
<div class="r" style="left:302px;top:299.52px;width:580.00px;height:14.04px;background:#4b4b20;"></div>
<div class="r" style="left:302.3px;top:117.0px;width:1.00px;height:519.48px;background:#404040;"></div>
<div class="r" style="left:324.86px;top:299.52px;width:1.00px;height:336.96px;background:#707070;"></div>
<div class="r" style="left:347.42px;top:439.91999999999996px;width:1.00px;height:70.20px;background:#404040;"></div>
<div class="r" style="left:347.42px;top:622.4399999999999px;width:1.00px;height:14.04px;background:#404040;"></div>
<div class="r" style="left:369.98px;top:453.96px;width:1.00px;height:14.04px;background:#404040;"></div>
<div class="r" style="left:369.98px;top:482.03999999999996px;width:1.00px;height:14.04px;background:#404040;"></div>
<div class="r" style="left:488.91999999999996px;top:243.85999999999999px;width:84.60px;height:13.04px;background:#3f3f3f;"></div>
<div class="r" style="left:449.44px;top:285.98px;width:84.60px;height:13.04px;background:#3f3f3f;"></div>
<div class="r" style="left:347.62px;top:286.48px;width:6.24px;height:12.04px;box-sizing:border-box;border:1px solid #888888;background:rgba(41,98,24,0.1)"></div>
<div class="r" style="left:533.74px;top:286.48px;width:6.24px;height:12.04px;box-sizing:border-box;border:1px solid #888888;background:rgba(41,98,24,0.1)"></div>
<div class="r" style="left:392.04px;top:160.62px;width:125.08px;height:11.04px;background:rgba(255,255,255,0.012);"></div>
<div class="r" style="left:459.72px;top:230.82px;width:198.40px;height:11.04px;background:rgba(255,255,255,0.012);"></div>
<div class="r" style="left:459.72px;top:258.9px;width:57.40px;height:11.04px;background:rgba(255,255,255,0.012);"></div>
<div class="r" style="left:425.88px;top:357.17999999999995px;width:23.56px;height:11.04px;background:rgba(255,255,255,0.012);"></div>
<div class="r" style="left:442.8px;top:385.26px;width:63.04px;height:11.04px;background:rgba(255,255,255,0.012);"></div>
<div class="r" style="left:397.68px;top:399.29999999999995px;width:113.80px;height:11.04px;background:rgba(255,255,255,0.012);"></div>
<div class="r" style="left:454.08000000000004px;top:441.41999999999996px;width:34.84px;height:11.04px;background:rgba(255,255,255,0.012);"></div>
<div class="r" style="left:442.8px;top:609.9px;width:51.76px;height:11.04px;background:rgba(255,255,255,0.012);"></div>
<div class="r" style="left:448.44px;top:623.9399999999999px;width:175.84px;height:11.04px;background:rgba(255,255,255,0.012);"></div>
<div class="r" style="left:0;top:0;width:882px;height:637px;overflow:hidden">
<div class="t" style="left:302.80px;top:103.97px;line-height:11.328px;font-size:10.0px;color:#d4d4d4;font-weight:400;font-family:'Liberation Mono', monospace;letter-spacing:-0.36px;-webkit-text-stroke:0.25px currentColor"><span style="color:#679ad1">final</span><span style="color:#d4d4d4"> </span><span style="color:#679ad1">class</span><span style="color:#d4d4d4"> SourceSelectionViewModel </span><span style="color:#f9d849">{</span></div>
<div class="t" style="left:302.80px;top:119.97px;line-height:11.328px;font-size:10.0px;color:#d4d4d4;font-weight:400;font-family:'Liberation Mono', monospace;letter-spacing:-0.36px;-webkit-text-stroke:0.25px currentColor"><span style="color:#d4d4d4">    </span><span style="color:#74985c">// MARK: - Properties</span></div>
<div class="t" style="left:302.80px;top:148.05px;line-height:11.328px;font-size:10.0px;color:#d4d4d4;font-weight:400;font-family:'Liberation Mono', monospace;letter-spacing:-0.36px;-webkit-text-stroke:0.25px currentColor"><span style="color:#d4d4d4">    </span><span style="color:#679ad1">let</span><span style="color:#d4d4d4"> sources: Observable&lt;</span><span style="color:#cc76d1">[</span><span style="color:#d4d4d4">RssSourceViewModel</span><span style="color:#cc76d1">]</span><span style="color:#d4d4d4">&gt;</span></div>
<div class="t" style="left:302.80px;top:162.09px;line-height:11.328px;font-size:10.0px;color:#d4d4d4;font-weight:400;font-family:'Liberation Mono', monospace;letter-spacing:-0.36px;-webkit-text-stroke:0.25px currentColor"><span style="color:#d4d4d4">    </span><span style="color:#679ad1">let</span><span style="color:#d4d4d4"> filter</span><span style="color:#8f8f8f">: BehaviorRelay&lt;String?&gt;</span><span style="color:#d4d4d4"> = BehaviorRelay&lt;String?&gt;</span><span style="color:#cc76d1">(</span><span style="color:#d4d4d4">value: </span><span style="color:#679ad1">nil</span><span style="color:#cc76d1">)</span></div>
<div class="t" style="left:302.80px;top:176.13px;line-height:11.328px;font-size:10.0px;color:#d4d4d4;font-weight:400;font-family:'Liberation Mono', monospace;letter-spacing:-0.36px;-webkit-text-stroke:0.25px currentColor"><span style="color:#d4d4d4">    </span><span style="color:#679ad1">let</span><span style="color:#d4d4d4"> isValid: Observable&lt;Bool&gt;</span></div>
<div class="t" style="left:302.80px;top:204.21px;line-height:11.328px;font-size:10.0px;color:#d4d4d4;font-weight:400;font-family:'Liberation Mono', monospace;letter-spacing:-0.36px;-webkit-text-stroke:0.25px currentColor"><span style="color:#d4d4d4">    </span><span style="color:#74985c">// MARK: - Fields</span></div>
<div class="t" style="left:302.80px;top:232.29px;line-height:11.328px;font-size:10.0px;color:#d4d4d4;font-weight:400;font-family:'Liberation Mono', monospace;letter-spacing:-0.36px;-webkit-text-stroke:0.25px currentColor"><span style="color:#d4d4d4">    </span><span style="color:#679ad1">private</span><span style="color:#d4d4d4"> </span><span style="color:#679ad1">let</span><span style="color:#d4d4d4"> allSources</span><span style="color:#8f8f8f">: BehaviorRelay&lt;[RssSourceViewModel]&gt;</span><span style="color:#d4d4d4"> = BehaviorRelay&lt;</span><span style="color:#cc76d1">[</span><span style="color:#d4d4d4">RssSourceViewModel</span><span style="color:#cc76d1">]</span><span style="color:#d4d4d4">&gt;</span><span style="color:#cc76d1">(</span><span style="color:#d4d4d4">v</span></div>
<div class="t" style="left:302.80px;top:246.33px;line-height:11.328px;font-size:10.0px;color:#d4d4d4;font-weight:400;font-family:'Liberation Mono', monospace;letter-spacing:-0.36px;-webkit-text-stroke:0.25px currentColor"><span style="color:#d4d4d4">    </span><span style="color:#679ad1">private</span><span style="color:#d4d4d4"> </span><span style="color:#679ad1">let</span><span style="color:#d4d4d4"> settingsService: </span><span style="color:#d4d4d4">SettingsService</span></div>
<div class="t" style="left:302.80px;top:260.37px;line-height:11.328px;font-size:10.0px;color:#d4d4d4;font-weight:400;font-family:'Liberation Mono', monospace;letter-spacing:-0.36px;-webkit-text-stroke:0.25px currentColor"><span style="color:#d4d4d4">    </span><span style="color:#679ad1">private</span><span style="color:#d4d4d4"> </span><span style="color:#679ad1">var</span><span style="color:#d4d4d4"> disposeBag</span><span style="color:#8f8f8f">: DisposeBag</span><span style="color:#d4d4d4"> = DisposeBag</span><span style="color:#cc76d1">()</span></div>
<div class="t" style="left:302.80px;top:288.45px;line-height:11.328px;font-size:10.0px;color:#d4d4d4;font-weight:400;font-family:'Liberation Mono', monospace;letter-spacing:-0.36px;-webkit-text-stroke:0.25px currentColor"><span style="color:#d4d4d4">    </span><span style="color:#679ad1">init</span><span style="color:#cc76d1">(</span><span style="color:#d4d4d4">settingsService: </span><span style="color:#d4d4d4">SettingsService</span><span style="color:#cc76d1">)</span><span style="color:#d4d4d4"> </span><span style="color:#cc76d1">{</span></div>
<div class="t" style="left:302.80px;top:302.49px;line-height:11.328px;font-size:10.0px;color:#d4d4d4;font-weight:400;font-family:'Liberation Mono', monospace;letter-spacing:-0.36px;-webkit-text-stroke:0.25px currentColor"><span style="color:#d4d4d4">        </span><span style="color:#679ad1">self</span><span style="color:#d4d4d4">.settingsService = </span></div>
<div class="t" style="left:302.80px;top:330.57px;line-height:11.328px;font-size:10.0px;color:#d4d4d4;font-weight:400;font-family:'Liberation Mono', monospace;letter-spacing:-0.36px;-webkit-text-stroke:0.25px currentColor"><span style="color:#d4d4d4">        Logger.data.debug</span><span style="color:#4a9df8">(</span><span style="color:#c5947c">&quot;Loading bundled sources&quot;</span><span style="color:#4a9df8">)</span></div>
<div class="t" style="left:302.80px;top:358.65px;line-height:11.328px;font-size:10.0px;color:#d4d4d4;font-weight:400;font-family:'Liberation Mono', monospace;letter-spacing:-0.36px;-webkit-text-stroke:0.25px currentColor"><span style="color:#d4d4d4">        </span><span style="color:#679ad1">let</span><span style="color:#d4d4d4"> jsonData</span><span style="color:#8f8f8f">: Data</span><span style="color:#d4d4d4"> = Bundle.main.loadFile</span><span style="color:#4a9df8">(</span><span style="color:#d4d4d4">filename: </span><span style="color:#c5947c">&quot;sources.json&quot;</span><span style="color:#4a9df8">)</span><span style="color:#d4d4d4">!</span></div>
<div class="t" style="left:302.80px;top:386.73px;line-height:11.328px;font-size:10.0px;color:#d4d4d4;font-weight:400;font-family:'Liberation Mono', monospace;letter-spacing:-0.36px;-webkit-text-stroke:0.25px currentColor"><span style="color:#d4d4d4">        </span><span style="color:#679ad1">let</span><span style="color:#d4d4d4"> jsonDecoder</span><span style="color:#8f8f8f">: JSONDecoder</span><span style="color:#d4d4d4"> = JSONDecoder</span><span style="color:#4a9df8">()</span></div>
<div class="t" style="left:302.80px;top:400.77px;line-height:11.328px;font-size:10.0px;color:#d4d4d4;font-weight:400;font-family:'Liberation Mono', monospace;letter-spacing:-0.36px;-webkit-text-stroke:0.25px currentColor"><span style="color:#d4d4d4">        </span><span style="color:#679ad1">let</span><span style="color:#d4d4d4"> all</span><span style="color:#8f8f8f">: [RssSourceViewModel]</span><span style="color:#d4d4d4"> = </span><span style="color:#4a9df8">(</span><span style="color:#679ad1">try</span><span style="color:#d4d4d4">! jsonDecoder.decode</span><span style="color:#f9d849">(</span><span style="color:#d4d4d4">Array&lt;RssSource&gt;.</span><span style="color:#679ad1">self</span><span style="color:#d4d4d4">, from: jsonData</span><span style="color:#f9d849">)</span></div>
<div class="t" style="left:302.80px;top:428.85px;line-height:11.328px;font-size:10.0px;color:#d4d4d4;font-weight:400;font-family:'Liberation Mono', monospace;letter-spacing:-0.36px;-webkit-text-stroke:0.25px currentColor"><span style="color:#d4d4d4">        sources = Observable.combineLatest</span><span style="color:#4a9df8">(</span><span style="color:#d4d4d4">allSources.asObservable</span><span style="color:#f9d849">()</span><span style="color:#d4d4d4">, filter.asObservable</span><span style="color:#f9d849">()</span><span style="color:#4a9df8">)</span><span style="color:#d4d4d4"> </span><span style="color:#4a9df8">{</span><span style="color:#d4d4d4"> </span><span style="color:#f9d849">(</span><span style="color:#d4d4d4">all: </span><span style="color:#cc76d1">[</span><span style="color:#d4d4d4">R</span></div>
<div class="t" style="left:302.80px;top:442.89px;line-height:11.328px;font-size:10.0px;color:#d4d4d4;font-weight:400;font-family:'Liberation Mono', monospace;letter-spacing:-0.36px;-webkit-text-stroke:0.25px currentColor"><span style="color:#d4d4d4">            </span><span style="color:#679ad1">if</span><span style="color:#d4d4d4"> </span><span style="color:#679ad1">let</span><span style="color:#d4d4d4"> filter</span><span style="color:#8f8f8f">: String</span><span style="color:#d4d4d4"> = filter, !filter.isEmpty </span><span style="color:#f9d849">{</span></div>
<div class="t" style="left:302.80px;top:456.93px;line-height:11.328px;font-size:10.0px;color:#d4d4d4;font-weight:400;font-family:'Liberation Mono', monospace;letter-spacing:-0.36px;-webkit-text-stroke:0.25px currentColor"><span style="color:#d4d4d4">                </span><span style="color:#679ad1">return</span><span style="color:#d4d4d4"> all.filter</span><span style="color:#cc76d1">(</span><span style="color:#4a9df8">{</span><span style="color:#d4d4d4"> </span><span style="color:#679ad1">$0</span><span style="color:#d4d4d4">.source.title.lowercased</span><span style="color:#f9d849">()</span><span style="color:#d4d4d4">.contains</span><span style="color:#f9d849">(</span><span style="color:#d4d4d4">filter.lowercased</span><span style="color:#cc76d1">()</span><span style="color:#f9d849">)</span><span style="color:#d4d4d4"> </span><span style="color:#4a9df8">}</span><span style="color:#cc76d1">)</span></div>
<div class="t" style="left:302.80px;top:470.97px;line-height:11.328px;font-size:10.0px;color:#d4d4d4;font-weight:400;font-family:'Liberation Mono', monospace;letter-spacing:-0.36px;-webkit-text-stroke:0.25px currentColor"><span style="color:#d4d4d4">            </span><span style="color:#f9d849">}</span><span style="color:#d4d4d4"> </span><span style="color:#679ad1">else</span><span style="color:#d4d4d4"> </span><span style="color:#f9d849">{</span></div>
<div class="t" style="left:302.80px;top:485.01px;line-height:11.328px;font-size:10.0px;color:#d4d4d4;font-weight:400;font-family:'Liberation Mono', monospace;letter-spacing:-0.36px;-webkit-text-stroke:0.25px currentColor"><span style="color:#d4d4d4">                </span><span style="color:#679ad1">return</span><span style="color:#d4d4d4"> all</span></div>
<div class="t" style="left:302.80px;top:499.05px;line-height:11.328px;font-size:10.0px;color:#d4d4d4;font-weight:400;font-family:'Liberation Mono', monospace;letter-spacing:-0.36px;-webkit-text-stroke:0.25px currentColor"><span style="color:#d4d4d4">            </span><span style="color:#f9d849">}</span></div>
<div class="t" style="left:302.80px;top:513.09px;line-height:11.328px;font-size:10.0px;color:#d4d4d4;font-weight:400;font-family:'Liberation Mono', monospace;letter-spacing:-0.36px;-webkit-text-stroke:0.25px currentColor"><span style="color:#d4d4d4">        </span><span style="color:#4a9df8">}</span></div>
<div class="t" style="left:302.80px;top:541.17px;line-height:11.328px;font-size:10.0px;color:#d4d4d4;font-weight:400;font-family:'Liberation Mono', monospace;letter-spacing:-0.36px;-webkit-text-stroke:0.25px currentColor"><span style="color:#d4d4d4">        isValid = sources.asObservable</span><span style="color:#4a9df8">()</span><span style="color:#d4d4d4">.flatMap </span><span style="color:#4a9df8">{</span><span style="color:#d4d4d4"> Observable.combineLatest</span><span style="color:#f9d849">(</span><span style="color:#679ad1">$0</span><span style="color:#d4d4d4">.map </span><span style="color:#cc76d1">{</span><span style="color:#d4d4d4"> </span><span style="color:#679ad1">$0</span><span style="color:#d4d4d4">.isSelected.asOb</span></div>
<div class="t" style="left:302.80px;top:569.25px;line-height:11.328px;font-size:10.0px;color:#d4d4d4;font-weight:400;font-family:'Liberation Mono', monospace;letter-spacing:-0.36px;-webkit-text-stroke:0.25px currentColor"><span style="color:#d4d4d4">        allSources.accept</span><span style="color:#4a9df8">(</span><span style="color:#d4d4d4">all</span><span style="color:#4a9df8">)</span></div>
<div class="t" style="left:302.80px;top:597.33px;line-height:11.328px;font-size:10.0px;color:#d4d4d4;font-weight:400;font-family:'Liberation Mono', monospace;letter-spacing:-0.36px;-webkit-text-stroke:0.25px currentColor"><span style="color:#d4d4d4">        </span><span style="color:#74985c">// selecting again from feed</span></div>
<div class="t" style="left:302.80px;top:611.37px;line-height:11.328px;font-size:10.0px;color:#d4d4d4;font-weight:400;font-family:'Liberation Mono', monospace;letter-spacing:-0.36px;-webkit-text-stroke:0.25px currentColor"><span style="color:#d4d4d4">        </span><span style="color:#679ad1">if</span><span style="color:#d4d4d4"> </span><span style="color:#679ad1">let</span><span style="color:#d4d4d4"> selected</span><span style="color:#8f8f8f">: RssSource</span><span style="color:#d4d4d4"> = settingsService.selectedSource </span><span style="color:#4a9df8">{</span></div>
<div class="t" style="left:302.80px;top:625.41px;line-height:11.328px;font-size:10.0px;color:#d4d4d4;font-weight:400;font-family:'Liberation Mono', monospace;letter-spacing:-0.36px;-webkit-text-stroke:0.25px currentColor"><span style="color:#d4d4d4">            </span><span style="color:#679ad1">if</span><span style="color:#d4d4d4"> </span><span style="color:#679ad1">let</span><span style="color:#d4d4d4"> index</span><span style="color:#8f8f8f">: Array&lt;RssSourceViewModel&gt;.Index</span><span style="color:#d4d4d4"> = allSources.value.firstIndex</span><span style="color:#f9d849">(</span><span style="color:#d4d4d4">where: </span><span style="color:#cc76d1">{</span><span style="color:#d4d4d4"> </span><span style="color:#679ad1">$0</span><span style="color:#d4d4d4">.sou</span></div>
<div class="t" style="left:492.30px;top:302.49px;line-height:11.328px;font-size:10.0px;color:#d4d4d4;font-weight:400;font-family:'Liberation Mono', monospace;letter-spacing:-0.36px;-webkit-text-stroke:0.25px currentColor">settingsService</div>
</div>
<div class="r" style="left:252px;top:115.5px;width:630.00px;height:1.00px;background:#101010;"></div>
<div class="r" style="left:252px;top:116px;width:630px;height:3px;background:linear-gradient(#000000aa,#00000000)"></div>
<svg class="r" style="left:252.5px;top:300px;" width="13" height="13" viewBox="0 0 13 13"><path d="M1.3 1.5h6.2l4.2 5-4.2 5H1.3z" fill="none" stroke="#f7ce46" stroke-width="1.5" stroke-linejoin="round"/><circle cx="5.3" cy="6.5" r="1.9" fill="#d2331f"/></svg>
<svg class="r" style="left:304.5px;top:285.5px;" width="10" height="12" viewBox="0 0 10 12"><path d="M5 0.8a4 4 0 0 0-2.2 7.4v1.3h4.4V8.2A4 4 0 0 0 5 0.8z" fill="#f7ce46"/><rect x="3.2" y="9.6" width="3.6" height="1.8" rx="0.6" fill="#f7ce46"/></svg>
<svg class="r" style="left:479px;top:301.52px;" width="11" height="11" viewBox="0 0 11 11"><path d="M1.2 1.2h5l3.6 4.3-3.6 4.3h-5z" fill="none" stroke="#f7ce46" stroke-width="1.3" stroke-linejoin="round"/></svg>
<div class="r" style="left:882px;top:101px;width:87.00px;height:536.00px;background:#1e1e1e;"></div>
<div class="r" style="left:879px;top:101px;width:4px;height:536px;background:linear-gradient(90deg,rgba(0,0,0,0),rgba(0,0,0,0.55))"></div>
<div class="r" style="left:886px;top:101.5px;width:1.00px;height:10.10px;background:#435436;"></div>
<div class="r" style="left:889px;top:103.3px;width:23.50px;height:1.00px;background:#536941;"></div>
<div class="r" style="left:889px;top:104.8px;width:9.00px;height:1.00px;background:#536941;"></div>
<div class="r" style="left:889px;top:107.6px;width:27.00px;height:1.00px;background:#536941;"></div>
<div class="r" style="left:889px;top:109.4px;width:38.60px;height:1.00px;background:#536941;"></div>
<div class="r" style="left:886px;top:113.8px;width:4.50px;height:6.20px;background:#415982;"></div>
<div class="r" style="left:891px;top:114.3px;width:8.00px;height:0.90px;background:#6a6a6a;"></div>
<div class="r" style="left:891px;top:115.8px;width:6.00px;height:0.90px;background:#6a6a6a;"></div>
<div class="r" style="left:891px;top:117.3px;width:7.00px;height:0.90px;background:#6a6a6a;"></div>
<div class="r" style="left:891px;top:118.8px;width:5.00px;height:0.90px;background:#6a6a6a;"></div>
<div class="r" style="left:886px;top:121.8px;width:7.00px;height:1.00px;background:#46608c;"></div>
<div class="r" style="left:894px;top:121.8px;width:21.00px;height:1.00px;background:#8a8a8a;"></div>
<div class="t" style="left:888.00px;top:125.52px;line-height:8.491px;font-size:7.6px;color:#dcdcdc;font-weight:700;font-family:'Liberation Sans', sans-serif;">Properties</div>
<div class="r" style="left:926px;top:130.3px;width:18.00px;height:0.80px;background:#4a4a4a;"></div>
<div class="t" style="left:888.00px;top:134.72px;line-height:8.491px;font-size:7.6px;color:#dcdcdc;font-weight:700;font-family:'Liberation Sans', sans-serif;">Fields</div>
<div class="r" style="left:911px;top:138.3px;width:58.00px;height:0.80px;background:#4a4a4a;"></div>
<div class="r" style="left:911px;top:140.2px;width:24.00px;height:0.80px;background:#4a4a4a;"></div>
<div class="r" style="left:892.3px;top:144.5px;width:2.75px;height:0.90px;background:#46608c;"></div>
<div class="r" style="left:895.6px;top:144.5px;width:16.50px;height:0.90px;background:#585858;"></div>
<div class="r" style="left:893.4px;top:146.7px;width:13.75px;height:0.90px;background:#585858;"></div>
<div class="r" style="left:907.7px;top:146.7px;width:12.10px;height:0.90px;background:#755b4b;"></div>
<div class="r" style="left:893.4px;top:148.89999999999998px;width:2.20px;height:0.90px;background:#46608c;"></div>
<div class="r" style="left:896.15px;top:148.89999999999998px;width:22.00px;height:0.90px;background:#585858;"></div>
<div class="r" style="left:918.7px;top:148.89999999999998px;width:9.90px;height:0.90px;background:#755b4b;"></div>
<div class="r" style="left:893.4px;top:151.09999999999997px;width:16.50px;height:0.90px;background:#585858;"></div>
<div class="r" style="left:893.4px;top:153.29999999999995px;width:27.50px;height:0.90px;background:#585858;"></div>
<div class="r" style="left:921.45px;top:153.29999999999995px;width:2.20px;height:0.90px;background:#46608c;"></div>
<div class="r" style="left:924.2px;top:153.29999999999995px;width:27.50px;height:0.90px;background:#585858;"></div>
<div class="r" style="left:893.4px;top:155.49999999999994px;width:38.50px;height:0.90px;background:#585858;"></div>
<div class="r" style="left:932.45px;top:155.49999999999994px;width:2.20px;height:0.90px;background:#46608c;"></div>
<div class="r" style="left:935.2px;top:155.49999999999994px;width:22.00px;height:0.90px;background:#585858;"></div>
<div class="r" style="left:895.6px;top:157.69999999999993px;width:16.50px;height:0.90px;background:#585858;"></div>
<div class="r" style="left:912.65px;top:157.69999999999993px;width:33.00px;height:0.90px;background:#585858;"></div>
<div class="r" style="left:897.8px;top:159.89999999999992px;width:3.30px;height:0.90px;background:#46608c;"></div>
<div class="r" style="left:901.65px;top:159.89999999999992px;width:38.50px;height:0.90px;background:#585858;"></div>
<div class="r" style="left:895.6px;top:162.0999999999999px;width:5.50px;height:0.90px;background:#585858;"></div>
<div class="r" style="left:897.8px;top:164.2999999999999px;width:3.30px;height:0.90px;background:#46608c;"></div>
<div class="r" style="left:901.65px;top:164.2999999999999px;width:2.75px;height:0.90px;background:#585858;"></div>
<div class="r" style="left:895.6px;top:166.4999999999999px;width:0.55px;height:0.90px;background:#585858;"></div>
<div class="r" style="left:893.4px;top:168.69999999999987px;width:0.55px;height:0.90px;background:#585858;"></div>
<div class="r" style="left:893.4px;top:173.09999999999985px;width:30.25px;height:0.90px;background:#585858;"></div>
<div class="r" style="left:924.2px;top:173.09999999999985px;width:2.75px;height:0.90px;background:#46608c;"></div>
<div class="r" style="left:927.5px;top:173.09999999999985px;width:22.00px;height:0.90px;background:#585858;"></div>
<div class="r" style="left:893.4px;top:175.29999999999984px;width:12.10px;height:0.90px;background:#585858;"></div>
<div class="r" style="left:893.4px;top:179.69999999999982px;width:15.40px;height:0.90px;background:#536941;"></div>
<div class="r" style="left:893.4px;top:181.8999999999998px;width:3.30px;height:0.90px;background:#46608c;"></div>
<div class="r" style="left:897.25px;top:181.8999999999998px;width:33.00px;height:0.90px;background:#585858;"></div>
<div class="r" style="left:895.6px;top:184.0999999999998px;width:3.30px;height:0.90px;background:#46608c;"></div>
<div class="r" style="left:899.45px;top:184.0999999999998px;width:27.50px;height:0.90px;background:#585858;"></div>
<div class="r" style="left:927.5px;top:184.0999999999998px;width:3.30px;height:0.90px;background:#46608c;"></div>
<div class="r" style="left:931.35px;top:184.0999999999998px;width:22.00px;height:0.90px;background:#585858;"></div>
<div class="r" style="left:897.8px;top:186.29999999999978px;width:16.50px;height:0.90px;background:#585858;"></div>
<div class="r" style="left:914.85px;top:186.29999999999978px;width:13.75px;height:0.90px;background:#755b4b;"></div>
<div class="r" style="left:897.8px;top:188.49999999999977px;width:22.00px;height:0.90px;background:#585858;"></div>
<div class="r" style="left:895.6px;top:190.69999999999976px;width:0.55px;height:0.90px;background:#585858;"></div>
<div class="r" style="left:893.4px;top:192.89999999999975px;width:0.55px;height:0.90px;background:#585858;"></div>
<div class="t" style="left:888.00px;top:197.72px;line-height:8.491px;font-size:7.6px;color:#dcdcdc;font-weight:700;font-family:'Liberation Sans', sans-serif;">Actions</div>
<div class="r" style="left:916px;top:202.3px;width:14.00px;height:0.80px;background:#4a4a4a;"></div>
<div class="r" style="left:893.4px;top:207.5px;width:16.50px;height:0.90px;background:#536941;"></div>
<div class="r" style="left:893.4px;top:211.89999999999998px;width:20.90px;height:0.90px;background:#585858;"></div>
<div class="r" style="left:892.3px;top:216.29999999999995px;width:2.20px;height:0.90px;background:#46608c;"></div>
<div class="r" style="left:895.05px;top:216.29999999999995px;width:16.50px;height:0.90px;background:#585858;"></div>
<div class="r" style="left:893.4px;top:218.49999999999994px;width:22.00px;height:0.90px;background:#585858;"></div>
<div class="r" style="left:915.95px;top:218.49999999999994px;width:33.00px;height:0.90px;background:#585858;"></div>
<div class="r" style="left:893.4px;top:220.69999999999993px;width:27.50px;height:0.90px;background:#585858;"></div>
<div class="r" style="left:892.3px;top:222.89999999999992px;width:0.55px;height:0.90px;background:#585858;"></div>
<div class="r" style="left:892.3px;top:227.2999999999999px;width:2.20px;height:0.90px;background:#46608c;"></div>
<div class="r" style="left:895.05px;top:227.2999999999999px;width:16.50px;height:0.90px;background:#585858;"></div>
<div class="r" style="left:893.4px;top:229.4999999999999px;width:22.00px;height:0.90px;background:#585858;"></div>
<div class="r" style="left:915.95px;top:229.4999999999999px;width:22.00px;height:0.90px;background:#755b4b;"></div>
<div class="r" style="left:938.5px;top:229.4999999999999px;width:16.50px;height:0.90px;background:#46608c;"></div>
<div class="r" style="left:955.55px;top:229.4999999999999px;width:11.00px;height:0.90px;background:#585858;"></div>
<div class="r" style="left:895.6px;top:231.69999999999987px;width:5.50px;height:0.90px;background:#585858;"></div>
<div class="r" style="left:892.3px;top:233.89999999999986px;width:0.55px;height:0.90px;background:#585858;"></div>
<div class="r" style="left:892.3px;top:238.29999999999984px;width:22.00px;height:0.90px;background:#585858;"></div>
<div class="r" style="left:892.3px;top:240.49999999999983px;width:2.75px;height:0.90px;background:#46608c;"></div>
<div class="r" style="left:969px;top:101px;width:11.00px;height:536.00px;background:#1e1e1e;"></div>
<div class="r" style="left:969px;top:160.7px;width:11.00px;height:158.60px;background:rgba(121,121,121,0.4);"></div>
<div class="r" style="left:973px;top:201px;width:4.00px;height:7.00px;background:#9a9a9a;"></div>
<div class="r" style="left:969px;top:213.3px;width:11.00px;height:2.50px;background:#9a9a9a;"></div>
<div class="r" style="left:969px;top:219.5px;width:11.00px;height:4.50px;background:#6f6f4c;"></div>
<div class="r" style="left:303px;top:628px;width:352.00px;height:9.00px;background:rgba(121,121,121,0.4);"></div>
<div class="r" style="left:44px;top:637px;width:936.00px;height:17.00px;background:#bf6c3f;"></div>
<div class="r" style="left:44px;top:637px;width:26.00px;height:17.00px;background:#3d8060;"></div>
<svg class="r" style="left:51.5px;top:639px;" width="11" height="13" viewBox="0 0 11 13"><path d="M1.6 5.3L5 8.2 1.6 11.1M9.4 1.9L6 4.8l3.4 2.9" fill="none" stroke="#fff" stroke-width="1.15"/></svg>
<svg class="r" style="left:75px;top:639.5px;" width="11" height="12" viewBox="0 0 11 12"><circle cx="2.5" cy="2.3" r="1.6" fill="none" stroke="#fff" stroke-width="1.1"/><circle cx="2.5" cy="9.7" r="1.6" fill="none" stroke="#fff" stroke-width="1.1"/><circle cx="8.5" cy="4.2" r="1.6" fill="none" stroke="#fff" stroke-width="1.1"/><path d="M2.5 3.9v4.2M8.5 5.8c0 2-2.5 2.6-5 3.4" fill="none" stroke="#fff" stroke-width="1.1"/></svg>
<div class="t" style="left:88.20px;top:640.64px;line-height:11.060px;font-size:9.9px;color:#ffffff;font-weight:400;font-family:'Liberation Sans', sans-serif;-webkit-text-stroke-width:0.3px">master*</div>
<svg class="r" style="left:127.5px;top:639.5px;" width="12" height="12" viewBox="0 0 12 12"><path d="M2 6A4 4 0 0 1 9.3 3.6M10 6A4 4 0 0 1 2.7 8.4" fill="none" stroke="#fff" stroke-width="1.1"/><path d="M9.8 1.3v2.8H7M2.2 10.7V7.9H5" fill="none" stroke="#fff" stroke-width="1.1"/></svg>
<svg class="r" style="left:149.5px;top:640px;" width="11" height="11" viewBox="0 0 11 11"><circle cx="5.5" cy="5.5" r="4.6" fill="none" stroke="#fff" stroke-width="1"/><path d="M3.6 3.6l3.8 3.8M7.4 3.6L3.6 7.4" stroke="#fff" stroke-width="1"/></svg>
<div class="t" style="left:163.60px;top:640.64px;line-height:11.060px;font-size:9.9px;color:#ffffff;font-weight:400;font-family:'Liberation Sans', sans-serif;-webkit-text-stroke-width:0.3px">0</div>
<svg class="r" style="left:172px;top:640px;" width="11" height="11" viewBox="0 0 11 11"><path d="M5.5 1.2L10.3 9.8H.7z" fill="none" stroke="#fff" stroke-width="1" stroke-linejoin="round"/><path d="M5.5 4.3v2.8M5.5 8v.9" stroke="#fff" stroke-width="1"/></svg>
<div class="t" style="left:185.40px;top:640.64px;line-height:11.060px;font-size:9.9px;color:#ffffff;font-weight:400;font-family:'Liberation Sans', sans-serif;-webkit-text-stroke-width:0.3px">0</div>
<svg class="r" style="left:203.5px;top:640px;" width="11" height="11" viewBox="0 0 11 11"><path d="M1.5 9.5l5-5M2 2l7.5 7.5M6.5 2.2a2 2 0 0 1 2.8-.7L8 2.8l.7.7 1.3-1.3a2 2 0 0 1-2.5 2.7M1 2.5L2.5 1" fill="none" stroke="#fff" stroke-width="1.1"/></svg>
<div class="t" style="left:217.60px;top:640.64px;line-height:11.060px;font-size:9.9px;color:#ffffff;font-weight:400;font-family:'Liberation Sans', sans-serif;-webkit-text-stroke-width:0.3px">1</div>
<svg class="r" style="left:235px;top:640px;" width="12" height="12" viewBox="0 0 12 12"><path d="M4.5 1.5v5M5 1.8l6 3.2-3 1.8" fill="none" stroke="#fff" stroke-width="1"/><rect x="1.3" y="6.8" width="4.4" height="4.4" rx="1.2" fill="none" stroke="#fff" stroke-width="1"/></svg>
<div class="t" style="left:249.40px;top:640.64px;line-height:11.060px;font-size:9.9px;color:#ffffff;font-weight:400;font-family:'Liberation Sans', sans-serif;-webkit-text-stroke-width:0.3px">Attach to running app (SweetPad) (iOSSampleApp)</div>
<div class="t" style="left:487.10px;top:640.82px;line-height:10.837px;font-size:9.7px;color:#ffffff;font-weight:400;font-family:'Liberation Sans', sans-serif;-webkit-text-stroke-width:0.3px">Format: auto</div>
<div class="t" style="left:548.50px;top:640.82px;line-height:10.837px;font-size:9.7px;color:#ffffff;font-weight:400;font-family:'Liberation Sans', sans-serif;-webkit-text-stroke-width:0.3px">Disasm: auto</div>
<div class="t" style="left:610.70px;top:640.82px;line-height:10.837px;font-size:9.7px;color:#ffffff;font-weight:400;font-family:'Liberation Sans', sans-serif;-webkit-text-stroke-width:0.3px">Deref: on</div>
<div class="t" style="left:657.20px;top:640.82px;line-height:10.837px;font-size:9.7px;color:#ffffff;font-weight:400;font-family:'Liberation Sans', sans-serif;-webkit-text-stroke-width:0.3px">Console: cmd</div>
<svg class="r" style="left:730.5px;top:640px;" width="10" height="11" viewBox="0 0 10 11"><circle cx="5" cy="2.6" r="1.8" fill="none" stroke="#fff" stroke-width="1"/><circle cx="2.5" cy="7.8" r="1.8" fill="none" stroke="#fff" stroke-width="1"/><circle cx="7.5" cy="7.8" r="1.8" fill="none" stroke="#fff" stroke-width="1"/></svg>
<div class="t" style="left:743.20px;top:641.00px;line-height:10.613px;font-size:9.5px;color:#ffffff;font-weight:400;font-family:'Liberation Sans', sans-serif;-webkit-text-stroke-width:0.3px">iOSSampleApp</div>
<svg class="r" style="left:823px;top:640px;" width="10" height="11" viewBox="0 0 10 11"><rect x="2" y="1" width="6" height="9" rx="1.2" fill="none" stroke="#fff" stroke-width="1"/><path d="M1 4v3M4.2 8.6h1.6" stroke="#fff" stroke-width="1"/></svg>
<div class="t" style="left:834.60px;top:640.64px;line-height:11.060px;font-size:9.9px;color:#ffffff;font-weight:400;font-family:'Liberation Sans', sans-serif;-webkit-text-stroke-width:0.3px">iPhone 16</div>
<svg class="r" style="left:907px;top:640px;" width="12" height="11" viewBox="0 0 12 11"><path d="M3 1C1.8 1 1.8 2 1.8 3.5S1 5.5.6 5.5c.4 0 1.2.5 1.2 2S1.8 10 3 10" fill="none" stroke="#fff" stroke-width="1"/><circle cx="7" cy="7.5" r="2" fill="none" stroke="#fff" stroke-width="1"/><path d="M6 1.5c1 1 1.8 2.5 1 4" fill="none" stroke="#fff" stroke-width="1"/></svg>
<div class="t" style="left:922.90px;top:640.55px;line-height:11.172px;font-size:10px;color:#ffffff;font-weight:400;font-family:'Liberation Sans', sans-serif;-webkit-text-stroke-width:0.3px">Swift</div>
<svg class="r" style="left:955px;top:639.5px;" width="13" height="12" viewBox="0 0 13 12"><path d="M1.6 7C1.6 5 2.6 4.2 6.5 4.2s4.9.8 4.9 2.8v1.9c0 1.5-2.2 2.4-4.9 2.4s-4.9-.9-4.9-2.4z" fill="#fff"/><circle cx="4.2" cy="4" r="2.9" fill="#fff"/><circle cx="8.8" cy="4" r="2.9" fill="#fff"/><circle cx="4.2" cy="4.2" r="1.4" fill="#bf6c3f"/><circle cx="8.8" cy="4.2" r="1.4" fill="#bf6c3f"/><rect x="5" y="7.4" width="1" height="1.9" fill="#bf6c3f"/><rect x="7.1" y="7.4" width="1" height="1.9" fill="#bf6c3f"/></svg>
</div>
</body></html>
